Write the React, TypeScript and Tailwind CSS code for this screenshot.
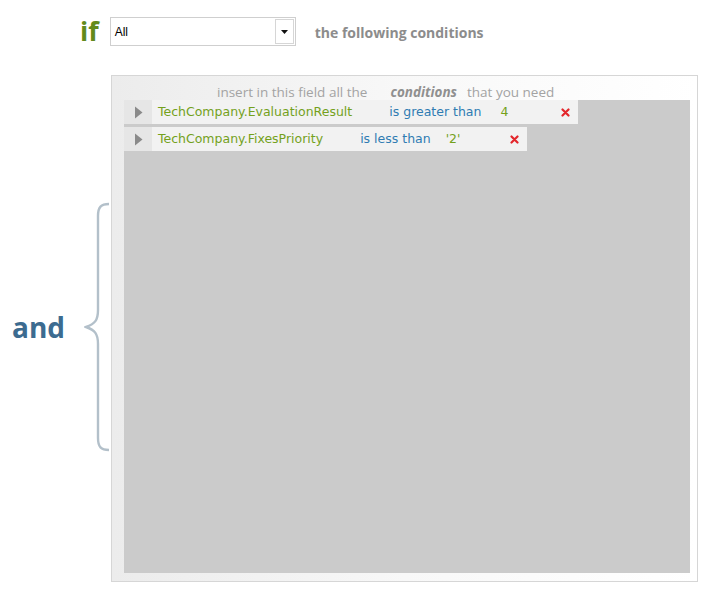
import React from "react";

type Condition = { field: string; op: string; value: string; valueGap: number; xGap: number };

const conditions: Condition[] = [
  { field: "TechCompany.EvaluationResult", op: "is greater than", value: "4", valueGap: 19, xGap: 53 },
  { field: "TechCompany.FixesPriority", op: "is less than", value: "'2'", valueGap: 15, xGap: 50 },
];

const RemoveIcon = () => (
  <svg width="9" height="9" viewBox="0 0 9 9" className="shrink-0">
    <path d="M1.5 1.5 L7.5 7.5 M7.5 1.5 L1.5 7.5" stroke="#e3262b" strokeWidth="2.2" strokeLinecap="round" />
  </svg>
);

const Brace = () => (
  <svg width="26" height="250" viewBox="0 0 26 250" className="shrink-0">
    <path
      d="M25 2 C17 2 14 5 14 14 L14 108 C14 118 11 122 2 125 C11 128 14 132 14 142 L14 236 C14 245 17 248 25 248"
      fill="none"
      stroke="#b3c0ca"
      strokeWidth="2.4"
    />
  </svg>
);

const ConditionRow = ({ c }: { c: Condition }) => (
  <div className="flex h-[24px] items-center bg-[#f2f2f2] font-['DejaVu_Sans',sans-serif] text-[12.5px]">
    <div className="flex h-full w-[28px] items-center justify-center bg-[#e6e6e6]">
      <svg width="9" height="13" viewBox="0 0 9 13">
        <path d="M1 0.5 L8.5 6.5 L1 12.5 Z" fill="#8a8a8a" />
      </svg>
    </div>
    <span className="ml-[6px] text-[#74a11c]">{c.field}</span>
    <span className="ml-[37px] text-[#2f7cb2]">{c.op}</span>
    <span className="text-[#74a11c]" style={{ marginLeft: c.valueGap }}>
      {c.value}
    </span>
    <span className="flex items-center" style={{ marginLeft: c.xGap }}>
      <RemoveIcon />
    </span>
    <span className="w-[8px]" />
  </div>
);

export default function App() {
  return (
    <div className="h-[590px] w-[703px] bg-white font-['Open_Sans',sans-serif]">
      <div className="flex items-center pl-[80px] pt-[17px]">
        <span className="-mt-[3px] text-[27px] font-bold leading-none text-[#628a1c]">if</span>
        <div className="ml-[11px] flex h-[29px] w-[186px] items-center justify-between border border-[#cfcfcf] bg-white pl-[4px] pr-[1px]">
          <span className="font-['Liberation_Sans',sans-serif] text-[12px] text-black">All</span>
          <div className="flex h-[25px] w-[19px] items-center justify-center border border-[#d6d6d6] bg-white">
            <svg width="7" height="4" viewBox="0 0 7 4">
              <path d="M0 0 L7 0 L3.5 4 Z" fill="#111" />
            </svg>
          </div>
        </div>
        <span className="ml-[19px] mt-[2px] text-[14px] font-bold text-[#8c8c8c]">the following conditions</span>
      </div>

      <div className="mt-[29px] flex">
        <div className="-mt-[3px] flex w-[111px] shrink-0 items-center">
          <span className="ml-[12px] text-[28px] font-bold leading-none text-[#3c6b90]">and</span>
          <span className="ml-auto mr-[1px]">
            <Brace />
          </span>
        </div>

        <div className="flex h-[507px] w-[587px] flex-col border border-[#d6d6d6] bg-linear-to-r from-[#ececec] via-[#f8f8f8] to-white pb-[8px] pl-[12px] pr-[7px]">
          <div className="flex h-[24px] items-end pb-[1px] pl-[93px] text-[13.5px] leading-none text-[#a3a3a3]">
            <span>insert in this field all the</span>
            <span className="ml-[23px] font-bold italic text-[#909090]">conditions</span>
            <span className="ml-[10px]">that you need</span>
          </div>
          <div className="flex flex-1 flex-col items-start gap-[3px] bg-[#cbcbcb]">
            {conditions.map((c) => (
              <ConditionRow key={c.field} c={c} />
            ))}
          </div>
        </div>
      </div>
    </div>
  );
}
